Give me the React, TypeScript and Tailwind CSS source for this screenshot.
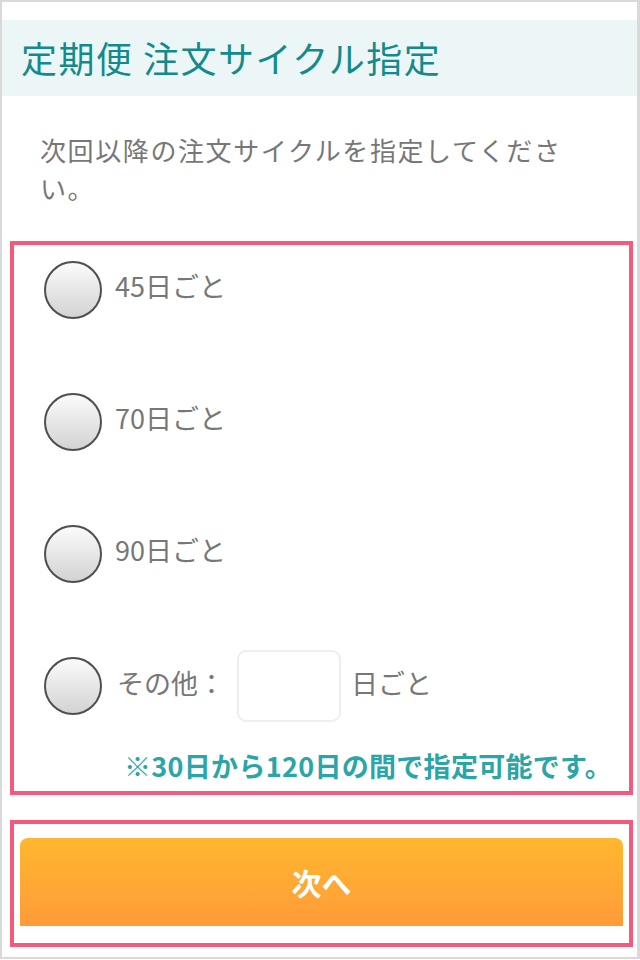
import React from 'react';

const options = ['45日ごと', '70日ごと', '90日ごと'];

const Radio: React.FC = () => (
  <span className="block w-[58px] h-[58px] shrink-0 rounded-full border-2 border-[#4f4f4f] bg-linear-to-b from-[#fbfbfb] to-[#d3d3d3]" />
);

const App: React.FC = () => {
  return (
    <div className="w-[640px] h-[960px] bg-white font-['Noto_Sans_CJK_JP','Noto_Sans',sans-serif]">
      <div className="h-[959px] border-t-2 border-l-2 border-r-[3px] border-b-2 border-[#d9d9d9]">
        {/* Title band */}
        <div className="mt-[18px] h-[76px] bg-[#edf6f6] pl-[19px] flex items-center">
          <h1 className="text-[36px] text-[#138a8c] tracking-[1.5px] leading-none pb-[2px]">定期便 注文サイクル指定</h1>
        </div>

        <p className="mt-[35px] ml-[38px] w-[550px] text-[26px] leading-[38px] tracking-[1.6px] text-[#777]">
          次回以降の注文サイクルを指定してください。
        </p>

        {/* Cycle options */}
        <div className="mt-[34px] ml-[8px] w-[623px] border-4 border-[#f45a7c] pt-[16px] pb-[8px]">
          {options.map((label, i) => (
            <div key={label} className={`h-[58px] flex items-center pl-[30px] ${i > 0 ? 'mt-[74px]' : ''}`}>
              <Radio />
              <span className="ml-[13px] pb-[8px] text-[27px] text-[#777]">{label}</span>
            </div>
          ))}
          <div className="mt-[67px] h-[72px] flex items-center pl-[30px]">
            <Radio />
            <span className="ml-[15px] pb-[6px] text-[27px] text-[#777]">その他：</span>
            <input
              type="text"
              className="ml-[12px] w-[104px] h-[72px] rounded-[9px] border-2 border-[#eeeeee] bg-white outline-none"
            />
            <span className="ml-[10px] pb-[6px] text-[27px] text-[#777]">日ごと</span>
          </div>
          <p className="mt-[27px] pr-[17px] text-right text-[27px] font-bold leading-[34px] tracking-[0.3px] text-[#2aa5a8]">
            ※30日から120日の間で指定可能です。
          </p>
        </div>

        {/* Next */}
        <div className="mt-[25px] ml-[8px] w-[623px] border-4 border-[#f45a7c] pt-[14px] px-[6px] pb-[17px]">
          <button className="w-full h-[88px] rounded-t-[8px] bg-linear-to-b from-[#ffb72e] to-[#ff9b39] text-white text-[30px] font-bold">
            次へ
          </button>
        </div>
      </div>
    </div>
  );
};

export default App;
